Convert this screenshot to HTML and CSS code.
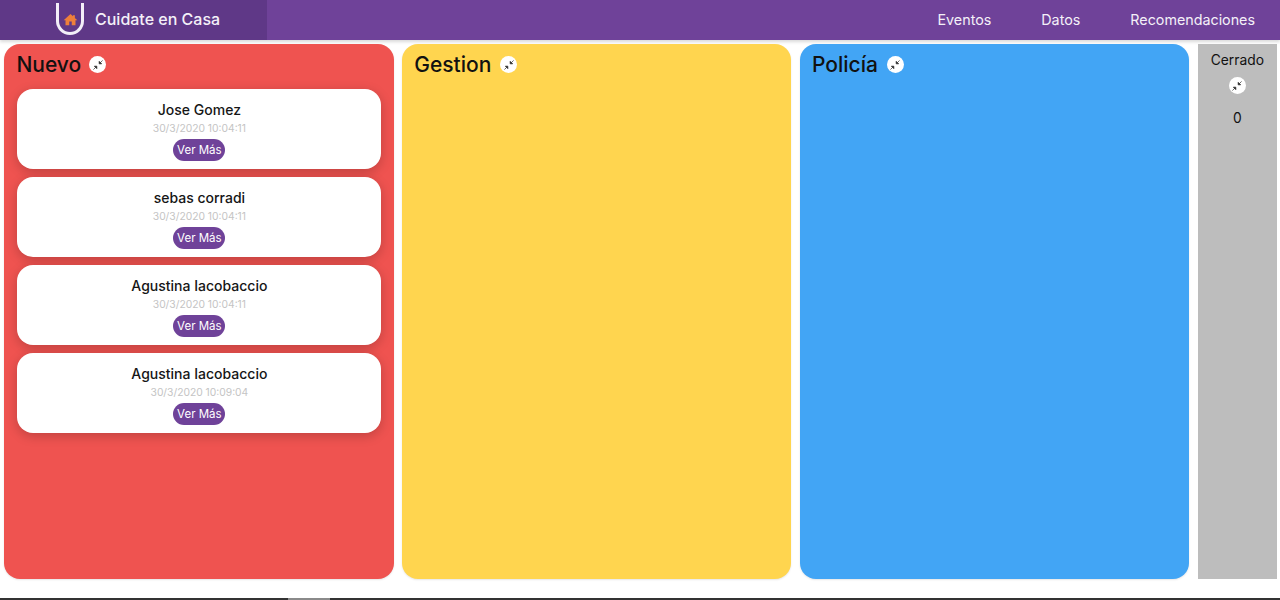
FILE: index.html
```html
<!DOCTYPE html>
<html lang="en">
<head>
    <meta charset="UTF-8">
    <title>Cuidate en Casa</title>
    <link rel="stylesheet" href="styles.css">
</head>
<body>
    <nav class="navbar">
        <div class="brand">
            <span class="brand-logo">
                <svg viewBox="0 0 24 24" fill="#ee7f3b"><path d="M12 3 1 13h3v8h6v-6h4v6h6v-8h3l-4-3.6V5h-3v1.7z"/></svg>
            </span>
            <span class="brand-name">Cuidate en Casa</span>
        </div>
        <ul class="nav-links">
            <li><a href="#">Eventos</a></li>
            <li><a href="#">Datos</a></li>
            <li><a href="#">Recomendaciones</a></li>
        </ul>
    </nav>

    <main class="board">
        <section class="column red">
            <div class="column-header">
                <h2>Nuevo</h2>
                <button class="collapse"><svg viewBox="0 0 12 12" fill="#222" stroke="#222" stroke-width="0.8"><path d="M7.4 4.6V1.6l3 3z"/><path d="M8.8 3.2l2.7-2.7" fill="none"/><path d="M4.6 7.4v3l-3-3z"/><path d="M3.2 8.8l-2.7 2.7" fill="none"/></svg></button>
            </div>
            <div class="card">
                <div class="card-name">Jose Gomez</div>
                <div class="card-date">30/3/2020 10:04:11</div>
                <a class="more" href="#">Ver Más</a>
            </div>
            <div class="card">
                <div class="card-name">sebas corradi</div>
                <div class="card-date">30/3/2020 10:04:11</div>
                <a class="more" href="#">Ver Más</a>
            </div>
            <div class="card">
                <div class="card-name">Agustina Iacobaccio</div>
                <div class="card-date">30/3/2020 10:04:11</div>
                <a class="more" href="#">Ver Más</a>
            </div>
            <div class="card">
                <div class="card-name">Agustina Iacobaccio</div>
                <div class="card-date">30/3/2020 10:09:04</div>
                <a class="more" href="#">Ver Más</a>
            </div>
        </section>

        <section class="column yellow">
            <div class="column-header">
                <h2>Gestion</h2>
                <button class="collapse"><svg viewBox="0 0 12 12" fill="#222" stroke="#222" stroke-width="0.8"><path d="M7.4 4.6V1.6l3 3z"/><path d="M8.8 3.2l2.7-2.7" fill="none"/><path d="M4.6 7.4v3l-3-3z"/><path d="M3.2 8.8l-2.7 2.7" fill="none"/></svg></button>
            </div>
        </section>

        <section class="column blue">
            <div class="column-header">
                <h2>Policía</h2>
                <button class="collapse"><svg viewBox="0 0 12 12" fill="#222" stroke="#222" stroke-width="0.8"><path d="M7.4 4.6V1.6l3 3z"/><path d="M8.8 3.2l2.7-2.7" fill="none"/><path d="M4.6 7.4v3l-3-3z"/><path d="M3.2 8.8l-2.7 2.7" fill="none"/></svg></button>
            </div>
        </section>

        <section class="closed">
            <div class="closed-title">Cerrado</div>
            <button class="collapse"><svg viewBox="0 0 12 12" fill="#222" stroke="#222" stroke-width="0.8"><path d="M7.4 4.6V1.6l3 3z"/><path d="M8.8 3.2l2.7-2.7" fill="none"/><path d="M4.6 7.4v3l-3-3z"/><path d="M3.2 8.8l-2.7 2.7" fill="none"/></svg></button>
            <div class="closed-count">0</div>
        </section>
    </main>

    <div class="bottom-line">
        <div class="bottom-thumb"></div>
    </div>
</body>
</html>
```

FILE: styles.css
```css
* {
    margin: 0;
    padding: 0;
    box-sizing: border-box;
    font-family: 'Inter', 'Liberation Sans', sans-serif;
}

body {
    background: #ffffff;
    height: 600px;
    overflow: hidden;
    display: flex;
    flex-direction: column;
}

.navbar {
    height: 40px;
    background: #6f4299;
    display: flex;
    justify-content: space-between;
    align-items: center;
    box-shadow: 0 2px 3px rgba(0, 0, 0, 0.15);
}

.brand {
    width: 267px;
    height: 40px;
    padding-left: 56px;
    background: #5f3887;
    display: flex;
    align-items: center;
    gap: 11px;
}

.brand-logo {
    width: 28px;
    height: 32px;
    margin-top: -2px;
    border: 3.5px solid #f3eef8;
    border-top: none;
    border-radius: 0 0 14px 14px;
    display: flex;
    align-items: center;
    justify-content: center;
}

.brand-logo svg {
    width: 15px;
    height: 15px;
    margin-top: 3px;
}

.brand-name {
    color: #f4f0f8;
    font-size: 16px;
    font-weight: 500;
    margin-top: -3px;
}

.nav-links {
    list-style: none;
    display: flex;
    gap: 50px;
    padding-right: 25px;
    margin-top: -3px;
}

.nav-links a {
    color: #f4f0f8;
    font-size: 14.3px;
    text-decoration: none;
}

.board {
    height: 535px;
    margin-top: 4px;
    padding-left: 4.4px;
    display: flex;
    gap: 8.7px;
}

.column {
    width: 389.1px;
    padding: 9px 13px;
    border-radius: 16px;
    box-shadow: 0 1px 2px rgba(0, 0, 0, 0.1);
}

.red {
    background: #ef5350;
    width: 390px;
    margin-right: -0.9px;
}
.yellow { background: #ffd54f; }
.blue { background: #42a5f5; }

.column-header {
    display: flex;
    align-items: center;
    gap: 8px;
    height: 23px;
    margin-bottom: 13px;
    margin-left: -1px;
}

.column-header h2 {
    font-size: 21px;
    font-weight: 500;
    color: #111111;
}

.yellow .column-header,
.blue .column-header {
    gap: 9px;
}

.collapse {
    width: 17px;
    height: 17px;
    border: none;
    border-radius: 50%;
    background: #ffffff;
    display: flex;
    align-items: center;
    justify-content: center;
}

.collapse svg {
    width: 10px;
    height: 10px;
}

.card {
    width: 364px;
    height: 79.5px;
    margin-bottom: 8.5px;
    padding-top: 13px;
    background: #ffffff;
    border-radius: 16px;
    box-shadow: 0 3px 12px rgba(0, 0, 0, 0.2);
    display: flex;
    flex-direction: column;
    align-items: center;
}

.card-name {
    font-size: 14px;
    line-height: 16px;
    font-weight: 500;
    color: #161616;
}

.card-date {
    margin-top: 3px;
    font-size: 10.3px;
    line-height: 14px;
    color: #c4c4c4;
}

.more {
    margin-top: 4px;
    width: 52px;
    height: 22px;
    border-radius: 11px;
    background: #6f4299;
    color: #ffffff;
    font-size: 11.5px;
    line-height: 22px;
    text-align: center;
    text-decoration: none;
}

.closed {
    width: 79.2px;
    padding-top: 8px;
    background: #bdbdbd;
    display: flex;
    flex-direction: column;
    align-items: center;
}

.closed-title {
    font-size: 13.8px;
    line-height: 17px;
    color: #111111;
}

.closed .collapse {
    margin-top: 8px;
}

.closed-count {
    margin-top: 16px;
    font-size: 13.8px;
    line-height: 17px;
    color: #111111;
}

.bottom-line {
    margin-top: auto;
    height: 2px;
    padding-left: 288px;
    background: #333333;
}

.bottom-thumb {
    width: 42px;
    height: 2px;
    background: #8a8a8a;
}
```
